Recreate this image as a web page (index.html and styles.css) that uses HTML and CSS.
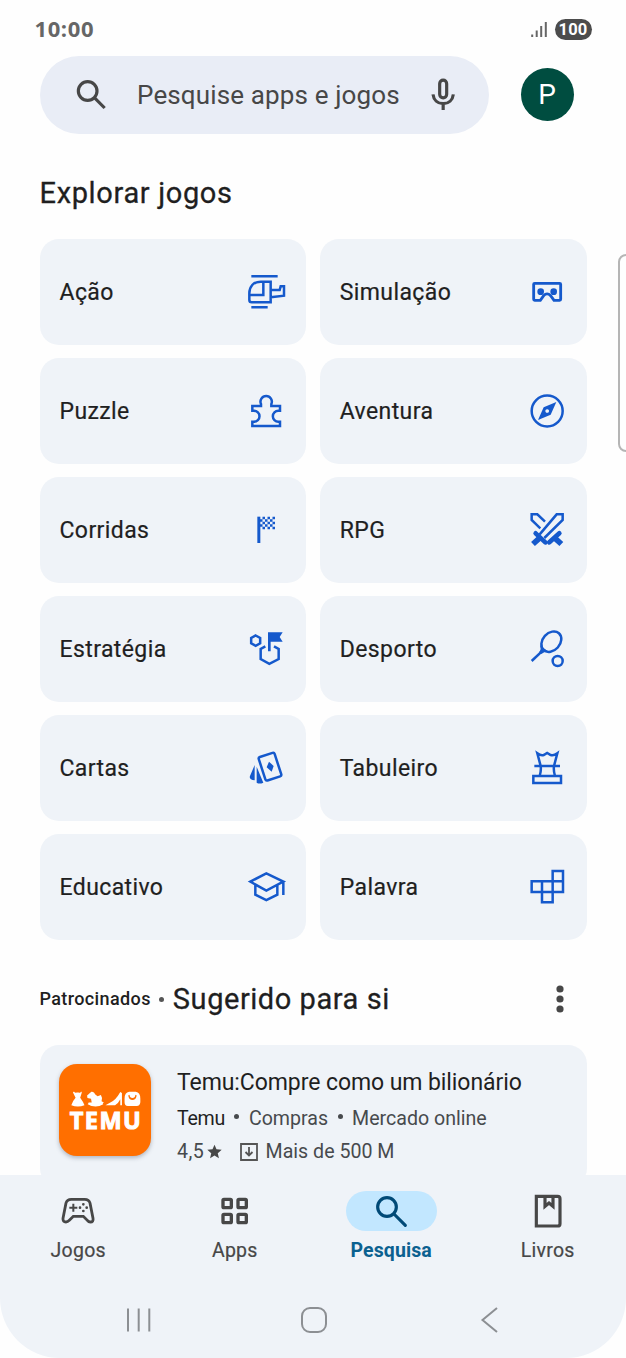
FILE: index.html
```html
<!DOCTYPE html>
<html lang="pt">
<head>
<meta charset="utf-8">
<title>Pesquisa</title>
<link rel="stylesheet" href="styles.css">
</head>
<body>
<div class="screen">
  <header class="status">
    <span class="clock">10:00</span>
    <span class="status-right">
      <svg class="signal" viewBox="0 0 17 17"><path d="M1.2 13.5V16M5.7 9.5V16M10.2 5V16M14.8 1V16"/></svg>
      <span class="battery">100</span>
    </span>
  </header>

  <div class="top">
    <div class="searchbar">
      <svg class="ic32" viewBox="0 0 96 96"><g class="line9"><circle cx="38" cy="36" r="28"/><path d="M58 56L89 87"/></g></svg>
      <span class="placeholder">Pesquise apps e jogos</span>
      <svg class="ic32 mic" viewBox="0 0 96 96"><g class="line9"><rect x="38" y="3.500" width="21" height="53" rx="10.500"/><path d="M18 46C20 63 32 74 48.500 74S77 63 79 46M48.500 74V93"/></g></svg>
    </div>
    <div class="avatar">P</div>
  </div>

  <main class="content">
    <h1 class="title">Explorar jogos</h1>
    <div class="grid">
      <div class="tile"><span>Ação</span><svg viewBox="0 0 120 120"><path d="M16 13H95M16 106H65M10 64C10 44 22 29 44 29H74V91H17Q10 91 10 84ZM52 29V69H10M74 54H101L104 43H114V71L74 76"/></svg></div>
      <div class="tile"><span>Simulação</span><svg viewBox="0 0 120 120"><path class="w8" d="M23 34H98Q101 34 101 37V82Q101 85 98 85H81L71 71Q60 60 50 71L40 85H23Q20 85 20 82V37Q20 34 23 34Z"/><circle class="fill" cx="41" cy="59" r="10"/><circle class="fill" cx="80" cy="59" r="10"/></svg></div>
      <div class="tile"><span>Puzzle</span><svg viewBox="0 0 120 120"><path d="M19 45H45V39A17 17 0 1 1 76 39V45H102V59H97A16.500 16.500 0 1 0 97 92H102V105H19V92H24A16.500 16.500 0 1 0 24 59H19Z"/></svg></div>
      <div class="tile"><span>Aventura</span><svg viewBox="0 0 120 120"><circle cx="60.500" cy="60" r="46.500"/><path class="fill" fill-rule="evenodd" d="M88 33L71 71L33 87L50 49ZM60.500 54.500A5.500 5.500 0 1 0 60.600 54.500Z"/></svg></div>
      <div class="tile"><span>Corridas</span><svg viewBox="0 0 120 120"><path class="fill" d="M34 20H43V99H34Z"/><path class="checks" d="M49.500 23.700H87M42 31.200H87M49.500 38.700H87M42 46.200H87M49.500 53.700H87"/></svg></div>
      <div class="tile"><span>RPG</span><svg viewBox="0 0 120 120"><path d="M38 73L89 13H107V30L52 84M54 35L31 13H14V30L40 55"/><path class="hilt" d="M26 70L55 97M97 70L67 97"/><path class="grip" d="M40 82L18 102M81 82L103 102"/></svg></div>
      <div class="tile"><span>Estratégia</span><svg viewBox="0 0 120 120"><path d="M29 19.500L42.500 27V43L29 50.500L15.500 43V27ZM58 52L44 60V90L70 104.500L98 90V60L84 52"/><path class="fill" d="M66 10H110L101 24L110 38H74V67H66Z"/></svg></div>
      <div class="tile"><span>Desporto</span><svg viewBox="0 0 120 120"><ellipse cx="73" cy="38" rx="26" ry="34" transform="rotate(42 73 38)"/><circle cx="92" cy="96" r="15"/><path d="M14 96L47 65"/><path class="fill" d="M40 50L65 68Q52 67 43 75L36 69Q43 63 40 50Z"/></svg></div>
      <div class="tile"><span>Cartas</span><svg viewBox="0 0 120 120"><rect x="47" y="19" width="50" height="74" rx="5" transform="rotate(-18 72 56)"/><path class="fill" d="M69 41L83 54L77 71L62 58ZM26 51V97Q8 94 12 84ZM32 56L52 104Q40 109 32 104Z"/></svg></div>
      <div class="tile"><span>Tabuleiro</span><svg viewBox="0 0 120 120"><path d="M19 84H102V105H19ZM22 54H99M38 84Q43 68 41 54L31 16Q42 24 50 21L60.500 15L71 21Q80 24 91 16L81 54Q79 68 84 84"/></svg></div>
      <div class="tile"><span>Educativo</span><svg viewBox="0 0 120 120"><path d="M13 44L61 19L112 44L61 71ZM28 54V83L61 99L94 83V54M112 42V84"/></svg></div>
      <div class="tile"><span>Palavra</span><svg viewBox="0 0 120 120"><path d="M77 43V12H108V75H14V43H108M45 43V106H77V43"/></svg></div>
    </div>

    <div class="section-head">
      <span class="sponsored">Patrocinados</span>
      <span class="sep"></span>
      <h2 class="suggest">Sugerido para si</h2>
      <svg class="more" viewBox="0 0 8 28"><circle cx="4" cy="4" r="3.600"/><circle cx="4" cy="14" r="3.600"/><circle cx="4" cy="24" r="3.600"/></svg>
    </div>

    <article class="card">
      <div class="logo">
        <svg class="goods" viewBox="0 0 216 48">
          <path d="M12 1Q16 7 20 4L26 4Q31 7 34 1L36 4L31 20Q40 32 44 43Q24 51 4 43Q7 31 17 20L9 4Z"/>
          <path d="M52 13L65 2Q73 0 77 10L84 16L94 12Q100 21 96 31L103 35Q88 51 60 42L56 35L66 35L64 23L53 21Z"/>
          <path d="M108 43L124 34Q139 28 153 3L158 6V43H153V25Q147 38 137 43Z"/>
          <path fill-rule="evenodd" d="M180 2H200Q214 4 214 23V34Q213 45 203 45H176Q166 45 166 34V23Q166 4 180 2ZM177 13Q180 27 190 27T203 13L199 11Q198 21 190 21T181 11Z"/>
          <path class="rocker" d="M55 38Q78 51 100 38"/>
        </svg>
        <span class="temu">TEMU</span>
      </div>
      <div class="info">
        <div class="name">Temu:Compre como um bilionário</div>
        <div class="meta"><span class="dev">Temu</span><i class="dot"></i><span>Compras</span><i class="dot"></i><span>Mercado online</span></div>
        <div class="stats"><span class="rate">4,5</span><svg class="star" viewBox="0 0 24 24"><path d="M12 1L15.200 8.500L23.500 9.200L17.200 14.600L19.100 22.700L12 18.400L4.900 22.700L6.800 14.600L.5 9.200L8.800 8.500Z"/></svg><svg class="dl" viewBox="0 0 18 18"><path d="M1 1H17V17H1ZM9 4V12M5.500 9L9 12.500L12.500 9"/></svg><span class="count">Mais de 500 M</span></div>
      </div>
    </article>
  </main>

  <footer class="bottom">
    <nav class="nav">
      <div class="item"><span class="pill"><svg viewBox="0 0 120 120"><path class="w8" d="M40 25H80Q93 25 96 36L105 82Q107 93 97 93Q92 93 88 88L76 76H46L34 88Q29 93 24 93Q14 93 15 82L24 36Q27 25 40 25Z"/><path d="M34 50H58M46 38V62"/><path class="pips" d="M76 40h.1M76 60h.1M66 50h.1M86 50h.1"/></svg></span><span class="lbl">Jogos</span></div>
      <div class="item"><span class="pill"><svg viewBox="0 0 120 120"><g class="line10"><rect x="24" y="25" width="25" height="25" rx="3"/><rect x="69" y="25" width="25" height="25" rx="3"/><rect x="24" y="70" width="25" height="25" rx="3"/><rect x="69" y="70" width="25" height="25" rx="3"/></g></svg></span><span class="lbl">Apps</span></div>
      <div class="item active"><span class="pill"><svg viewBox="0 0 120 120"><g class="line9 round"><circle cx="48" cy="48" r="28"/><path d="M69 69L103 103"/></g></svg></span><span class="lbl">Pesquisa</span></div>
      <div class="item"><span class="pill"><svg viewBox="0 0 120 120"><g class="line9"><path d="M25 16H89Q96 16 96 23V98Q96 105 89 105H25Z"/><path d="M51 14V46L63 36L75 46V14"/></g></svg></span><span class="lbl">Livros</span></div>
    </nav>
    <div class="system">
      <svg viewBox="0 0 28 28"><path d="M3 2.500V25.500M13.700 2.500V25.500M24.300 2.500V25.500"/></svg>
      <svg viewBox="0 0 28 28"><rect x="2" y="2" width="24" height="24" rx="8"/></svg>
      <svg viewBox="0 0 28 28"><path d="M21 2L6.500 14L21 26"/></svg>
    </div>
  </footer>
  <div class="edge-panel"></div>
</div>
</body>
</html>
```
FILE: styles.css
```css
* { box-sizing: border-box; }
body { margin: 0; background: #fefefe; font-family: Roboto, "Liberation Sans", sans-serif; color: #1f1f1f; }
svg { display: block; flex: none; fill: none; overflow: visible; }
.screen { position: relative; width: 626px; height: 1358px; overflow: hidden; display: flex; flex-direction: column; }

.status { flex: none; height: 56px; padding: 2px 34.5px 0; display: flex; align-items: center; justify-content: space-between; }
.clock { font: 700 22px/26px "Open Sans", sans-serif; color: #666; letter-spacing: .6px; padding-bottom: 2px; }
.status-right { display: flex; align-items: center; gap: 7px; }
.signal { width: 17px; height: 17px; stroke: #666; stroke-width: 2; }
.battery { width: 37px; height: 21px; border-radius: 11px; background: #4c4c4c; color: #fff; font: 700 16.5px/21px Roboto, sans-serif; text-align: center; letter-spacing: .2px; }

.top { flex: none; height: 78px; padding: 0 52.5px 0 39.5px; display: flex; align-items: center; justify-content: space-between; }
.searchbar { width: 449px; height: 78px; border-radius: 39px; background: #e9edf6; padding: 0 29.5px 0 35.500px; display: flex; align-items: center; color: #474747; }
.ic32 { width: 32px; height: 32px; stroke: currentColor; }
.placeholder { margin-left: 30px; font-size: 26px; line-height: 32px; white-space: nowrap; letter-spacing: .14px; }
.mic { margin-left: auto; }
.line9 { stroke-width: 9.500; }
.line10 { stroke-width: 10; }
.round { stroke-linecap: round; }
.avatar { width: 53px; height: 53px; margin-bottom: 1px; border-radius: 50%; background: #004d40; color: #fff; font: 400 28px/54px Roboto, sans-serif; text-align: center; }

.content { flex: 1; min-height: 0; overflow: hidden; padding: 0 39.5px; display: flex; flex-direction: column; }
.title { flex: none; margin: 41px 0 28px; font-weight: 400; font-size: 29px; line-height: 36px; white-space: nowrap; letter-spacing: .65px; -webkit-text-stroke: .3px currentColor; }
.grid { flex: none; display: grid; grid-template-columns: 1fr 1fr; grid-auto-rows: 105.500px; gap: 13.500px; }
.tile { background: #eff3f8; border-radius: 19px; padding: 0 20px; display: flex; align-items: center; justify-content: space-between; font-size: 23px; letter-spacing: .4px; }
.tile span { padding-top: 2px; -webkit-text-stroke: .2px currentColor; }
.tile svg { width: 40px; height: 40px; stroke: #1559cc; stroke-width: 7.500; }
.tile .w8, .w8 { stroke-width: 8.500; }
.fill { fill: #1559cc; stroke: none; }
.checks { stroke-width: 7.500; stroke-dasharray: 7.500; }
.hilt { stroke-width: 14; stroke-linecap: round; }
.grip { stroke-width: 17; }

.section-head { flex: none; height: 105px; padding-top: 14px; display: flex; align-items: center; }
.sponsored { font-weight: 500; font-size: 18px; letter-spacing: .38px; padding-bottom: 1px; }
.sep { width: 5px; height: 5px; border-radius: 50%; background: #555; margin: 0 8.500px; }
.suggest { margin: 0; font-weight: 400; font-size: 29px; line-height: 36px; white-space: nowrap; letter-spacing: .55px; -webkit-text-stroke: .3px currentColor; }
.more { width: 8px; height: 28px; fill: #474747; margin: 0 22.500px 0 auto; }

.card { flex: none; height: 142px; background: #eff3f8; border-radius: 19px; padding: 19px 19.500px; display: flex; gap: 26px; }
.logo { flex: none; width: 92px; height: 92px; border-radius: 18px; background: #ff6f00; box-shadow: 0 2px 4px rgba(60, 70, 90, .35); display: flex; flex-direction: column; align-items: center; padding-top: 27px; }
.goods { width: 71px; height: 16px; fill: #fff; }
.rocker { fill: none; stroke: #fff; stroke-width: 5; }
.temu { color: #fff; font: 700 23.500px/24px "Open Sans", sans-serif; letter-spacing: 1.4px; margin: 1px -2px 0 0; -webkit-text-stroke: 1px #fff; }
.info { padding-top: 4px; color: #474a4d; font-size: 19.600px; white-space: nowrap; }
.name { color: #1f1f1f; font-size: 23px; line-height: 30px; letter-spacing: -.08px; }
.meta { display: flex; align-items: center; line-height: 28px; margin-top: 7px; }
.dev { color: #1f1f1f; letter-spacing: -.3px; }
.dot { width: 5px; height: 5px; border-radius: 50%; background: #474a4d; margin: 0 9.500px 4px; }
.stats { display: flex; align-items: center; line-height: 28px; margin-top: 5px; }
.rate { letter-spacing: .4px; }
.star { width: 15px; height: 15px; fill: #474747; margin-left: 2.500px; }
.dl { width: 18px; height: 18px; stroke: #555; stroke-width: 1.800; margin: 0 7.500px 0 18.500px; }

.bottom { flex: none; height: 183px; background: #eff3f8; border-radius: 0 0 60px 60px; }
.nav { display: grid; grid-template-columns: repeat(4, 1fr); padding-top: 16px; }
.item { display: flex; flex-direction: column; align-items: center; color: #474747; font-size: 19.500px; }
.pill { width: 91px; height: 40px; border-radius: 20px; display: flex; align-items: center; justify-content: center; }
.pill svg { width: 40px; height: 40px; stroke: currentColor; stroke-width: 6; }
.pips { stroke-width: 8; stroke-linecap: round; }
.lbl { margin-top: 8px; line-height: 24px; letter-spacing: .25px; -webkit-text-stroke: .2px currentColor; }
.active .pill { background: #c2e7ff; color: #004a77; }
.active .lbl { color: #0b6190; font-weight: 700; letter-spacing: .1px; -webkit-text-stroke: 0; }
.system { display: flex; justify-content: space-between; padding: 42.500px 122.500px 0 124.500px; }
.system svg { width: 28px; height: 28px; stroke: #8c8f93; stroke-width: 2; }

.edge-panel { position: absolute; left: 618px; top: 254px; width: 20px; height: 198px; border: 2px solid #b5b5b5; border-radius: 8px; background: #fefefe; }
```
